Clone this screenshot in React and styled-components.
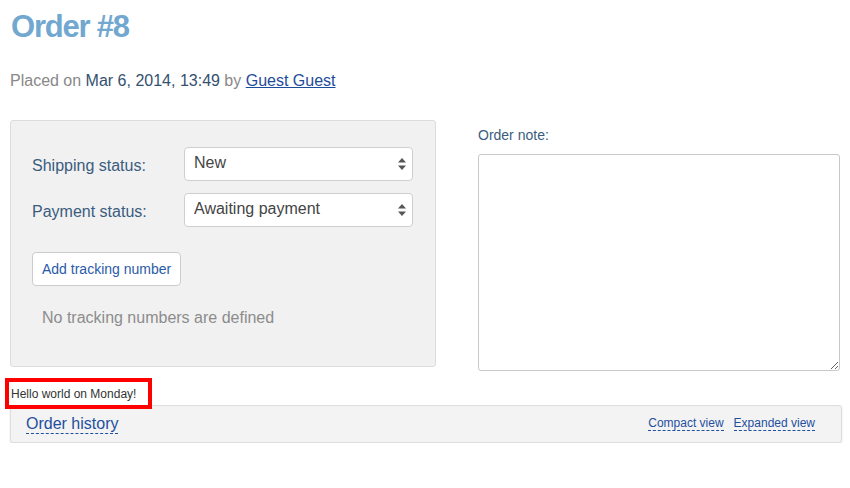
import React from 'react';
import styled, { createGlobalStyle } from 'styled-components';

const GlobalStyle = createGlobalStyle`
  body {
    margin: 0;
    background: #fff;
    font-family: "Liberation Sans", Arial, sans-serif;
    color: #333;
  }
`;

const Page = styled.div`
  padding: 0 10px;
`;

const Title = styled.h1`
  margin: 9px 0 0 1px;
  font-size: 31px;
  line-height: 36px;
  font-weight: 700;
  letter-spacing: -1.2px;
  color: #72a8d0;
`;

const Meta = styled.p`
  margin: 26px 0 0 0;
  font-size: 16px;
  line-height: 20px;
  color: #888;

  strong {
    font-weight: 400;
    color: #34506f;
  }

  a {
    color: #1d4c9a;
  }
`;

const Columns = styled.div`
  display: flex;
  align-items: flex-start;
  gap: 42px;
  margin-top: 29px;
`;

const Panel = styled.div`
  box-sizing: border-box;
  width: 426px;
  height: 247px;
  padding: 26px 21px 0;
  background: #f1f1f1;
  border: 1px solid #dcdcdc;
  border-radius: 3px;
`;

const StatusGrid = styled.div`
  display: grid;
  grid-template-columns: 152px 229px;
  row-gap: 12px;
  align-items: center;
`;

const StatusLabel = styled.label`
  font-size: 16px;
  line-height: 20px;
  color: #3a5c7e;
  padding-top: 4px;
`;

const SelectWrap = styled.div`
  position: relative;
  height: 34px;
`;

const Select = styled.select`
  appearance: none;
  box-sizing: border-box;
  width: 100%;
  height: 34px;
  padding: 0 24px 3px 9px;
  background: #fff;
  border: 1px solid #cfcfcf;
  border-radius: 4px;
  font-family: inherit;
  font-size: 16px;
  color: #444;
`;

const SelectArrows = styled.svg`
  position: absolute;
  right: 7px;
  top: 11px;
  pointer-events: none;
`;

const TrackButton = styled.button`
  box-sizing: border-box;
  display: block;
  height: 34px;
  margin-top: 25px;
  padding: 0 9px;
  background: #fff;
  border: 1px solid #cccccc;
  border-radius: 4px;
  font-family: inherit;
  font-size: 14px;
  color: #2a5ba8;
`;

const EmptyNote = styled.p`
  margin: 22px 0 0 10px;
  font-size: 16px;
  line-height: 20px;
  color: #8c8c8c;
`;

const NoteColumn = styled.div`
  flex: 1;
  padding-top: 7px;
`;

const NoteLabel = styled.label`
  display: block;
  font-size: 14px;
  line-height: 17px;
  color: #3a5c7e;
  margin-bottom: 10px;
`;

const NoteArea = styled.textarea`
  display: block;
  box-sizing: border-box;
  width: 100%;
  height: 217px;
  border: 1px solid #c8c8c8;
  border-radius: 3px;
  font-family: inherit;
  font-size: 14px;
`;

const Greeting = styled.div`
  width: fit-content;
  margin: 11px 0 0 -1px;
  padding: 0 12px 0 2px;
  height: 23px;
  font-size: 12px;
  line-height: 24px;
  color: #333;
  outline: 4px solid #ff0000;
`;

const HistoryBar = styled.div`
  box-sizing: border-box;
  display: flex;
  align-items: center;
  justify-content: space-between;
  height: 38px;
  margin-right: -2px;
  padding: 0 26px 0 15px;
  background: #f3f3f3;
  border: 1px solid #dddddd;
  border-radius: 3px;
  box-shadow: 0 1px 2px rgba(0, 0, 0, 0.12);
`;

const DashedLink = styled.a`
  font-size: ${(p) => (p.$small ? '12px' : '16px')};
  line-height: ${(p) => (p.$small ? '14px' : '18px')};
  color: #1f4f9f;
  text-decoration: none;
  border-bottom: 1px dashed #1f4f9f;
  cursor: pointer;
`;

const ViewLinks = styled.div`
  display: flex;
  gap: 10px;
  margin-top: -2px;
`;

const Arrows = () => (
  <SelectArrows width="8" height="12" viewBox="0 0 8 12">
    <path d="M4 0 L8 4.5 L0 4.5 Z" fill="#555" />
    <path d="M0 7.5 L8 7.5 L4 12 Z" fill="#555" />
  </SelectArrows>
);

const StatusSelect = ({ value, options }) => (
  <SelectWrap>
    <Select defaultValue={value}>
      {options.map((o) => (
        <option key={o}>{o}</option>
      ))}
    </Select>
    <Arrows />
  </SelectWrap>
);

export default function App() {
  return (
    <Page>
      <GlobalStyle />
      <Title>Order #8</Title>
      <Meta>
        Placed on <strong>Mar 6, 2014, 13:49</strong> by <a href="#">Guest Guest</a>
      </Meta>

      <Columns>
        <Panel>
          <StatusGrid>
            <StatusLabel>Shipping status:</StatusLabel>
            <StatusSelect value="New" options={['New', 'Processing', 'Shipped', 'Delivered']} />
            <StatusLabel>Payment status:</StatusLabel>
            <StatusSelect value="Awaiting payment" options={['Awaiting payment', 'Paid', 'Declined']} />
          </StatusGrid>
          <TrackButton>Add tracking number</TrackButton>
          <EmptyNote>No tracking numbers are defined</EmptyNote>
        </Panel>

        <NoteColumn>
          <NoteLabel>Order note:</NoteLabel>
          <NoteArea />
        </NoteColumn>
      </Columns>

      <Greeting>Hello world on Monday!</Greeting>

      <HistoryBar>
        <DashedLink>Order history</DashedLink>
        <ViewLinks>
          <DashedLink $small>Compact view</DashedLink>
          <DashedLink $small>Expanded view</DashedLink>
        </ViewLinks>
      </HistoryBar>
    </Page>
  );
}
